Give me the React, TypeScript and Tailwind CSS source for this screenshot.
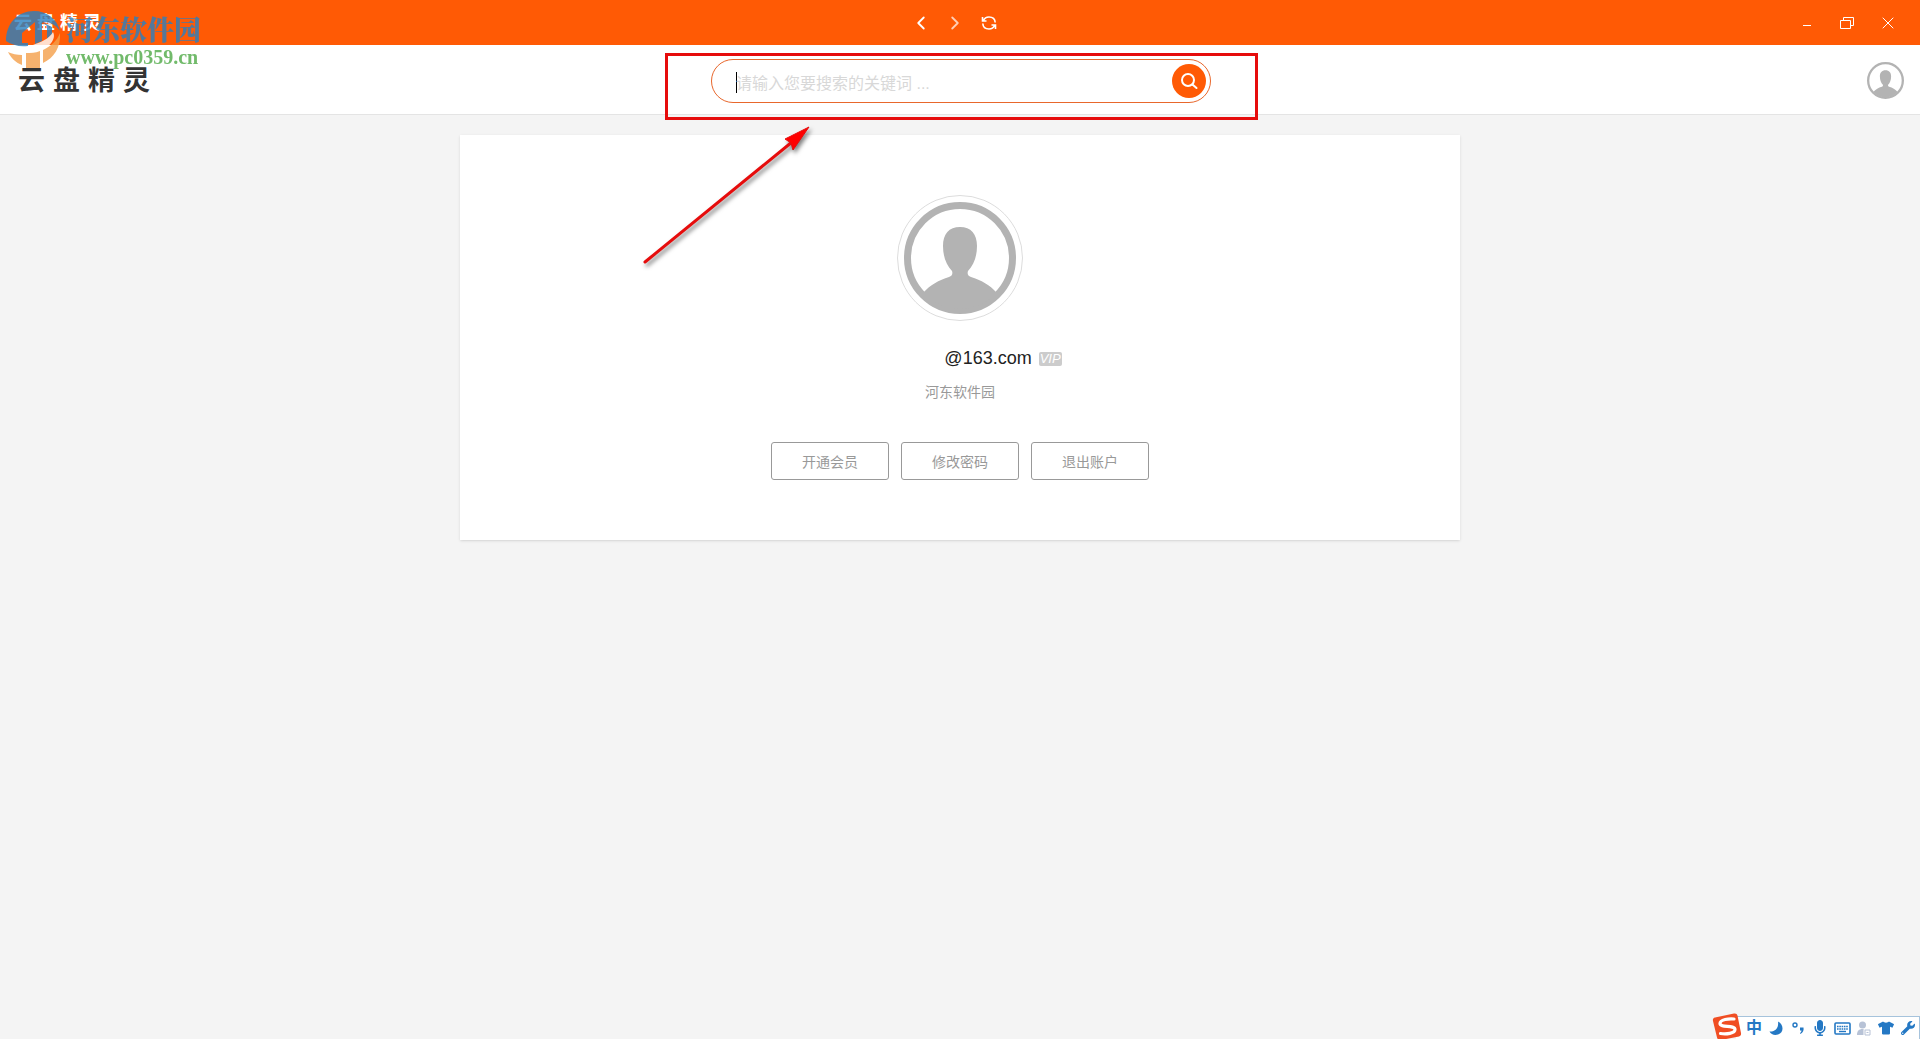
import { useState } from "react";
import { ChevronLeft, ChevronRight, X } from "lucide-react";
import { FaMicrophone, FaRegKeyboard, FaTshirt, FaWrench } from "react-icons/fa";

const actions = ["开通会员", "修改密码", "退出账户"];
const brand = ["云", "盘", "精", "灵"];

function Avatar({ className }: { className: string }) {
  return (
    <svg viewBox="0 0 112 112" className={className} aria-hidden="true">
      <circle cx="56" cy="56" r="52.5" fill="none" stroke="#b3b3b3" strokeWidth="7" />
      <path
        d="M56 25c-11 0-17 7-17 19 0 11 3.500 19 9 25 1 3 0 5-3 6-10 3-19 8-26 16A51 51 0 0 0 93 91c-7-8-16-13-26-16-3-1-4-3-3-6 5.500-6 9-14 9-25 0-12-6-19-17-19z"
        fill="#b3b3b3"
      />
    </svg>
  );
}

function TitleBar() {
  return (
    <header className="grid h-[45px] grid-cols-3 items-center bg-[#ff5a05] text-white">
      <div className="flex gap-[5px] pl-[14px] text-lg font-bold leading-none">
        {brand.map((c) => (
          <span key={c}>{c}</span>
        ))}
      </div>
      <nav className="flex items-center justify-center gap-3 pr-[10px]">
        <button aria-label="后退">
          <ChevronLeft size={22} strokeWidth={2} />
        </button>
        <button aria-label="前进" className="opacity-70">
          <ChevronRight size={22} strokeWidth={2} />
        </button>
        <button aria-label="刷新" className="px-[3px]">
          <svg width="16" height="16" viewBox="0 0 16 16" fill="none" stroke="currentColor" strokeWidth="1.6">
            <path d="M1.500 2V6H5.500M2.500 5.500C3.500 3 5.500 2 8 2c3.500 0 6 2 6.200 5.500" />
            <path d="M14.500 14V10H10.500M13.500 10.500c-1 2.500-3 3.500-5.500 3.500-3.500 0-6-2-6.200-5.500" />
          </svg>
        </button>
      </nav>
      <div className="flex items-center justify-end gap-6 pr-[22px]">
        <button aria-label="最小化">
          <svg width="16" height="16" viewBox="0 0 16 16" stroke="currentColor">
            <path d="M5 10.500h8" />
          </svg>
        </button>
        <button aria-label="还原">
          <svg width="16" height="16" viewBox="0 0 16 16" fill="none" stroke="currentColor">
            <path d="M2.500 5.500h10v8h-10zM5.500 5.500v-3h10v8h-3" />
          </svg>
        </button>
        <button aria-label="关闭">
          <X size={20} strokeWidth={1.2} />
        </button>
      </div>
    </header>
  );
}

function SearchBar() {
  const [keyword, setKeyword] = useState("");

  return (
    <form
      onSubmit={(e) => e.preventDefault()}
      className="flex h-11 w-[500px] items-center rounded-full border border-[#e8672c] bg-white pl-6 pr-1"
    >
      <span className="mt-1 h-[21px] w-px bg-black" />
      <input
        type="text"
        aria-label="搜索"
        value={keyword}
        onChange={(e) => setKeyword(e.target.value)}
        placeholder="请输入您要搜索的关键词 ..."
        className="-ml-px min-w-0 flex-1 pt-[6px] text-base outline-none placeholder:text-[#d8d8d8]"
      />
      <button aria-label="搜索" className="flex size-[34px] items-center justify-center rounded-full bg-[#ff5a05]">
        <svg width="18" height="18" viewBox="0 0 18 18" fill="none" stroke="#fff" strokeWidth="2" strokeLinecap="round">
          <circle cx="8" cy="8" r="6" />
          <path d="M12.500 12.500l4 3.500" />
        </svg>
      </button>
    </form>
  );
}

function ProfileCard() {
  return (
    <main className="mx-auto mt-5 flex max-w-[1000px] flex-col items-center bg-white py-[60px] shadow-sm">
      <div className="rounded-full border border-[#ddd] p-[6px]">
        <Avatar className="size-28" />
      </div>
      <div className="mt-6 flex items-center gap-[7px] pl-[86px] text-lg leading-[27px] text-[#222]">
        <span>@163.com</span>
        <span className="rounded-xs bg-[#ccc] px-px text-[13px] italic leading-[14px] text-white">VIP</span>
      </div>
      <p className="mt-[10px] text-sm text-[#999]">河东软件园</p>
      <div className="mt-10 flex gap-3">
        {actions.map((label) => (
          <button key={label} className="h-[38px] w-[118px] rounded-[3px] border border-[#999] pt-[2px] text-sm text-[#999]">
            {label}
          </button>
        ))}
      </div>
    </main>
  );
}

// Red frame and arrow pointing at the search box
function Callout() {
  return (
    <div className="pointer-events-none absolute left-1/2 top-[53px]">
      <div className="-ml-[295px] h-[67px] w-[593px] border-[3px] border-[#e60c0c]" />
      <svg width="180" height="150" viewBox="0 0 180 150" className="-ml-[320px] mt-[2px] drop-shadow-[2px_3px_2px_rgba(0,0,0,0.5)]" aria-hidden="true">
        <path d="M5 140L152 20" stroke="#e60c0c" strokeWidth="3" strokeLinecap="round" />
        <path d="M169 5L145 17l6 4 2 7z" fill="#f00" stroke="#e60c0c" />
      </svg>
    </div>
  );
}

function Watermark() {
  return (
    <div className="pointer-events-none absolute left-1 top-2 flex gap-1 opacity-80">
      <svg width="58" height="62" viewBox="0 0 58 62" aria-hidden="true">
        <path d="M2 33C2 15 14 3 30 3c13 0 23 8 26 20-4-6-10-9-16-9l-2 1v18l-7 3V14L18 25v10h6v3C15 39 8 37 2 33z" fill="#2a80c0" />
        <path d="M38 14l10 5v10l-5 4V18z" fill="#2a80c0" />
        <path d="M2 40c9 2 19 0 27-3s16-6 20-13c4 8-5 17-18 20-12 3-23 2-29-4z" fill="#fff" />
        <path d="M56 25c1 14-6 25-17 30V42c8-4 14-9 17-17zM4 44c3 6 8 11 14 13V47c-5 0-10-1-14-3zM22 45c5 0 9 0 14-2v17H22z" fill="#f4a04a" />
      </svg>
      <div className="flex flex-col gap-1 pt-[7px]">
        <span className="font-['Noto_Serif_CJK_SC','Noto_Sans_CJK_SC',serif] text-[27px] font-black leading-7 text-[#2a80c0]">
          河东软件园
        </span>
        <span className="font-['Liberation_Serif',serif] text-xl font-bold leading-5 text-[#4faa47]">
          www.pc0359.cn
        </span>
      </div>
    </div>
  );
}

function InputMethodBar() {
  return (
    <div className="absolute bottom-0 right-0 flex items-end">
      <svg width="30" height="27" viewBox="0 0 30 27" className="z-10 -mr-[6px]" aria-hidden="true">
        <path d="M3 5.500L22 1.500c2-.4 3 .5 3.500 2L29 21c.3 2-.5 3-2 3.500L9 28c-2 .4-3.500-.5-4-2.500L1 9c-.4-2 .3-3 2-3.500z" fill="#f04e23" />
        <path
          d="M22 7c-5-.5-14 .5-14 4.500 0 4.500 15 1 15 6 0 4-9 5-14.500 4"
          fill="none"
          stroke="#fff"
          strokeWidth="3.2"
          strokeLinecap="round"
        />
      </svg>
      <div className="grid h-[23px] auto-cols-[22px] grid-flow-col place-items-center border-r border-t border-[#a6c3dc] bg-white pl-[7px] text-[#2478c4]">
        <span className="text-base font-bold leading-none">中</span>
        <svg width="14" height="14" viewBox="0 0 14 14" fill="currentColor" aria-hidden="true">
          <path d="M9 .5c6 3 6 11 0 13-3.500 1-7 0-8.500-3C6 11 10 7 9 .5z" />
        </svg>
        <svg width="14" height="14" viewBox="0 0 14 14" aria-hidden="true">
          <circle cx="4" cy="4" r="2" fill="none" stroke="currentColor" strokeWidth="1.4" />
          <path d="M9 6.500h3.500c.5 3-.5 5-3 6.500L9 12c1-.8 1.500-1.500 1.500-2.500H9z" fill="currentColor" />
        </svg>
        <FaMicrophone size={16} />
        <svg width="17" height="13" viewBox="0 0 17 13" fill="none" stroke="currentColor" aria-hidden="true">
          <rect x="1" y="1" width="15" height="11" rx="1" strokeWidth="1.6" />
          <path d="M3 4.500h11M3 7h11" strokeWidth="1.4" strokeDasharray="1.6 0.7" />
          <path d="M5 9.500h7" strokeWidth="1.4" />
        </svg>
        <svg width="14" height="15" viewBox="0 0 14 15" fill="#b7c2d6" aria-hidden="true">
          <circle cx="5.500" cy="4" r="3.500" />
          <path d="M0 14c0-4 2-6 5.500-6 1 0 2 .2 3 .6H6.500V14z" />
          <path d="M8 9h5v5H8z" fill="#fff" stroke="#b7c2d6" />
          <path d="M9.500 11h2v1h-2z" />
        </svg>
        <FaTshirt size={16} />
        <FaWrench size={14} />
      </div>
    </div>
  );
}

export default function App() {
  return (
    <div className="relative min-h-screen bg-[#f4f4f4] font-['Liberation_Sans','Noto_Sans_CJK_SC',sans-serif]">
      <TitleBar />
      <div className="grid h-[70px] grid-cols-[1fr_auto_1fr] items-center border-b border-[#e4e4e4] bg-white pl-[18px] pr-4 pt-[2px]">
        <h1 className="flex gap-2 pt-[2px] text-[27px] font-bold leading-none text-[#333]">
          {brand.map((c) => (
            <span key={c}>{c}</span>
          ))}
        </h1>
        <SearchBar />
        <button aria-label="个人中心" className="justify-self-end">
          <Avatar className="size-[37px]" />
        </button>
      </div>
      <ProfileCard />
      <Callout />
      <Watermark />
      <InputMethodBar />
    </div>
  );
}
